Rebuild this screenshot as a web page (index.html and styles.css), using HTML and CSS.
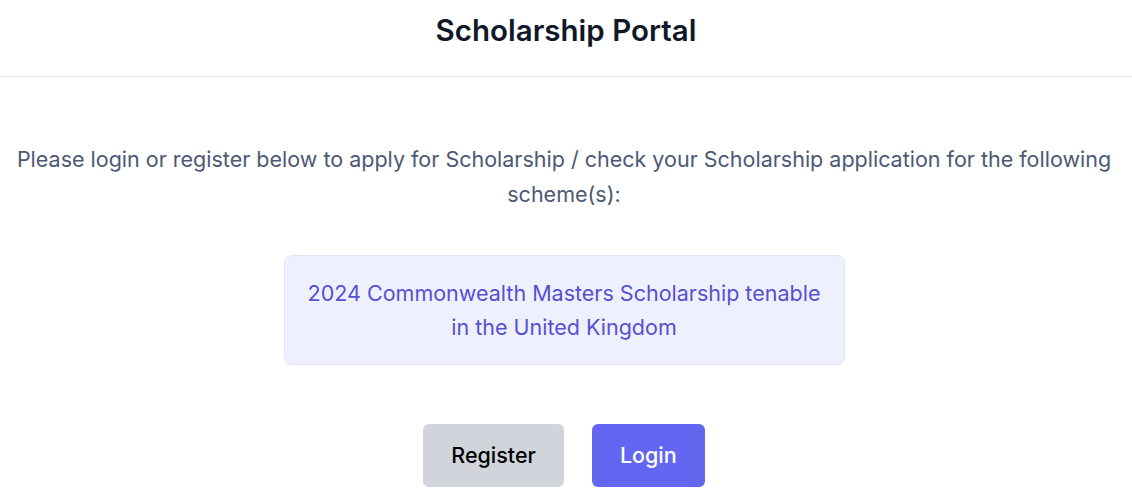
FILE: index.html
```html
<!DOCTYPE html>
<html lang="en">
<head>
<meta charset="utf-8">
<title>Scholarship Portal</title>
<link rel="stylesheet" href="styles.css">
</head>
<body>
<header class="site-header">
  <h1 class="title">Scholarship Portal</h1>
</header>
<main class="content">
  <p class="intro">Please login or register below to apply for Scholarship / check your Scholarship application for the following scheme(s):</p>
  <div class="scheme">2024 Commonwealth Masters Scholarship tenable in the United Kingdom</div>
  <div class="actions">
    <a class="btn btn-register" href="#">Register</a>
    <a class="btn btn-login" href="#">Login</a>
  </div>
</main>
</body>
</html>
```
FILE: styles.css
```css
* { box-sizing: border-box; }
html, body { margin: 0; padding: 0; background: #ffffff; }
body {
  font-family: Inter, "Noto Sans", sans-serif;
  color: #111827;
}
.site-header {
  height: 77px;
  border-bottom: 1px solid #e5e7eb;
  display: flex;
  align-items: center;
  justify-content: center;
}
.title {
  margin: 0;
  font-size: 29.5px;
  font-weight: 600;
  color: #111827;
  line-height: 1;
  padding-bottom: 15px;
}
.content {
  display: flex;
  flex-direction: column;
  align-items: center;
  padding: 65px 8px 0 4px;
}
.intro {
  margin: 0;
  font-size: 21.5px;
  line-height: 35px;
  color: #4d5875;
  text-align: center;
}
.scheme {
  margin-top: 43px;
  width: 561px;
  padding: 20px 18px;
  background: #eff0fe;
  border: 1px solid #e0e4fb;
  border-radius: 8px;
  color: #5650d2;
  font-size: 21.5px;
  line-height: 34px;
  text-align: center;
}
.actions {
  margin-top: 59px;
  display: flex;
  gap: 28px;
}
.btn {
  display: block;
  padding: 17px 28px 18px;
  font-size: 21.5px;
  line-height: 28px;
  border-radius: 6px;
  text-decoration: none;
  font-weight: 500;
}
.btn-register { background: #d1d5db; color: #000000; }
.btn-login { background: #6366f1; color: #ffffff; }
```
